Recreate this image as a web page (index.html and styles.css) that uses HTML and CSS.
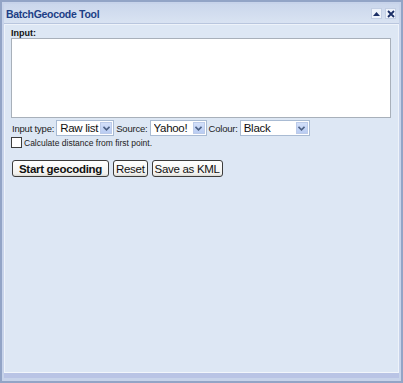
FILE: index.html
```html
<!DOCTYPE html>
<html lang="en">
<head>
    <meta charset="UTF-8">
    <title>BatchGeocode Tool</title>
    <link rel="stylesheet" href="styles.css">
</head>
<body>
    <div class="window">
        <div class="titlebar">
            <span class="title">BatchGeocode Tool</span>
            <div class="controls">
                <span class="ctl">
                    <svg width="7" height="4" viewBox="0 0 7 4"><path d="M0 4 L3.5 0 L7 4 Z" fill="#1b2f66"/></svg>
                </span>
                <span class="ctl">
                    <svg width="8" height="8" viewBox="0 0 8 8"><path d="M1 1 L7 7 M7 1 L1 7" stroke="#1b2f66" stroke-width="1.8"/></svg>
                </span>
            </div>
        </div>

        <div class="panel">
            <div class="input-label">Input:</div>
            <textarea class="input"></textarea>

            <div class="options">
                <span class="lbl">Input type:</span>
                <span class="select type-select">
                    <select><option>Raw list</option></select>
                    <span class="arrow"><svg width="7" height="5" viewBox="0 0 7 5"><path d="M0.5 0.8 L3.5 3.8 L6.5 0.8" fill="none" stroke="#4d6185" stroke-width="1.6"/></svg></span>
                </span>
                <span class="lbl">Source:</span>
                <span class="select source-select">
                    <select><option>Yahoo!</option></select>
                    <span class="arrow"><svg width="7" height="5" viewBox="0 0 7 5"><path d="M0.5 0.8 L3.5 3.8 L6.5 0.8" fill="none" stroke="#4d6185" stroke-width="1.6"/></svg></span>
                </span>
                <span class="lbl">Colour:</span>
                <span class="select colour-select">
                    <select><option>Black</option></select>
                    <span class="arrow"><svg width="7" height="5" viewBox="0 0 7 5"><path d="M0.5 0.8 L3.5 3.8 L6.5 0.8" fill="none" stroke="#4d6185" stroke-width="1.6"/></svg></span>
                </span>
            </div>

            <label class="check">
                <input type="checkbox">
                <span>Calculate distance from first point.</span>
            </label>

            <div class="actions">
                <button class="btn btn-main">Start geocoding</button>
                <button class="btn">Reset</button>
                <button class="btn">Save as KML</button>
            </div>
        </div>
    </div>
</body>
</html>
```

FILE: styles.css
```css
body {
    margin: 0;
    font-family: 'Liberation Sans', Arial, sans-serif;
    background: #9aabcb;
}

.window {
    box-sizing: border-box;
    width: 403px;
    height: 383px;
    display: flex;
    flex-direction: column;
    border: 2px solid #92a4c6;
    padding: 2px 2px 0 2px;
    background: #c7d3ea;
}

.titlebar {
    height: 19px;
    display: flex;
    align-items: center;
    justify-content: space-between;
    padding: 0 3px 0 2px;
    background: linear-gradient(to bottom, #cbd7ec 0%, #d9e3f2 100%);
    border-bottom: 1px solid #b9c6de;
}

.title {
    color: #1d3f86;
    font-weight: 700;
    font-size: 10.5px;
    letter-spacing: -0.3px;
}

.controls {
    display: flex;
    gap: 3px;
}

.ctl {
    width: 9px;
    height: 9px;
    display: flex;
    align-items: center;
    justify-content: center;
    background: #eef3fb;
    border: 1px solid #c3cfe4;
}

.panel {
    flex: 1;
    display: flex;
    flex-direction: column;
    align-items: flex-start;
    padding: 3px 6px 0 6px;
    background: #dde7f4;
    border: 1px solid #eef3fa;
    border-bottom: 1px solid #f2f6fb;
    box-shadow: 0 5px 0 #b9c4e5;
    margin-bottom: 8px;
}

.input-label {
    font-size: 9px;
    font-weight: 700;
    color: #111;
    height: 10px;
    line-height: 10px;
}

.input {
    box-sizing: border-box;
    width: 380px;
    height: 80px;
    margin: 0;
    border: 1px solid #a8b0ba;
    background: #fff;
    resize: none;
}

.options {
    display: flex;
    align-items: center;
    gap: 2px;
    margin-top: 2px;
    margin-left: 1px;
    height: 16px;
}

.lbl {
    font-size: 9.5px;
    color: #222;
    letter-spacing: -0.2px;
}

.select {
    box-sizing: border-box;
    height: 16px;
    display: flex;
    align-items: center;
    background: #fff;
    border: 1px solid #a9bbd3;
}

.select select {
    appearance: none;
    flex: 1;
    min-width: 0;
    border: none;
    background: transparent;
    font-family: 'Liberation Sans', Arial, sans-serif;
    font-size: 11.5px;
    letter-spacing: -0.3px;
    color: #111;
    padding: 0 0 0 3px;
    height: 14px;
    line-height: 14px;
}

.arrow {
    width: 12px;
    height: 12px;
    margin-right: 1px;
    display: flex;
    align-items: center;
    justify-content: center;
    background: linear-gradient(to bottom, #d3e0fa, #b9ccf2);
    border: 1px solid #bccbe9;
    box-sizing: border-box;
}

.type-select { width: 58px; }
.source-select { width: 57px; }
.colour-select { width: 70px; }

.check {
    display: flex;
    align-items: center;
    gap: 2px;
    margin-top: 1px;
    font-size: 8.5px;
    color: #222;
}

.check input {
    appearance: none;
    margin: 0;
    width: 11px;
    height: 11px;
    border: 1px solid #3d3d3d;
    background: #fff;
}

.actions {
    display: flex;
    gap: 4px;
    margin-top: 12px;
    padding-left: 1px;
}

.btn {
    height: 17px;
    padding: 0 2px;
    border: 1px solid #3c3c3c;
    border-radius: 3px;
    background: linear-gradient(to bottom, #ffffff 0%, #f1f1ee 85%, #d8d8d2 100%);
    font-family: 'Liberation Sans', Arial, sans-serif;
    font-size: 11.5px;
    color: #111;
    letter-spacing: -0.3px;
}

.btn-main {
    font-weight: 700;
    width: 97px;
}
```
